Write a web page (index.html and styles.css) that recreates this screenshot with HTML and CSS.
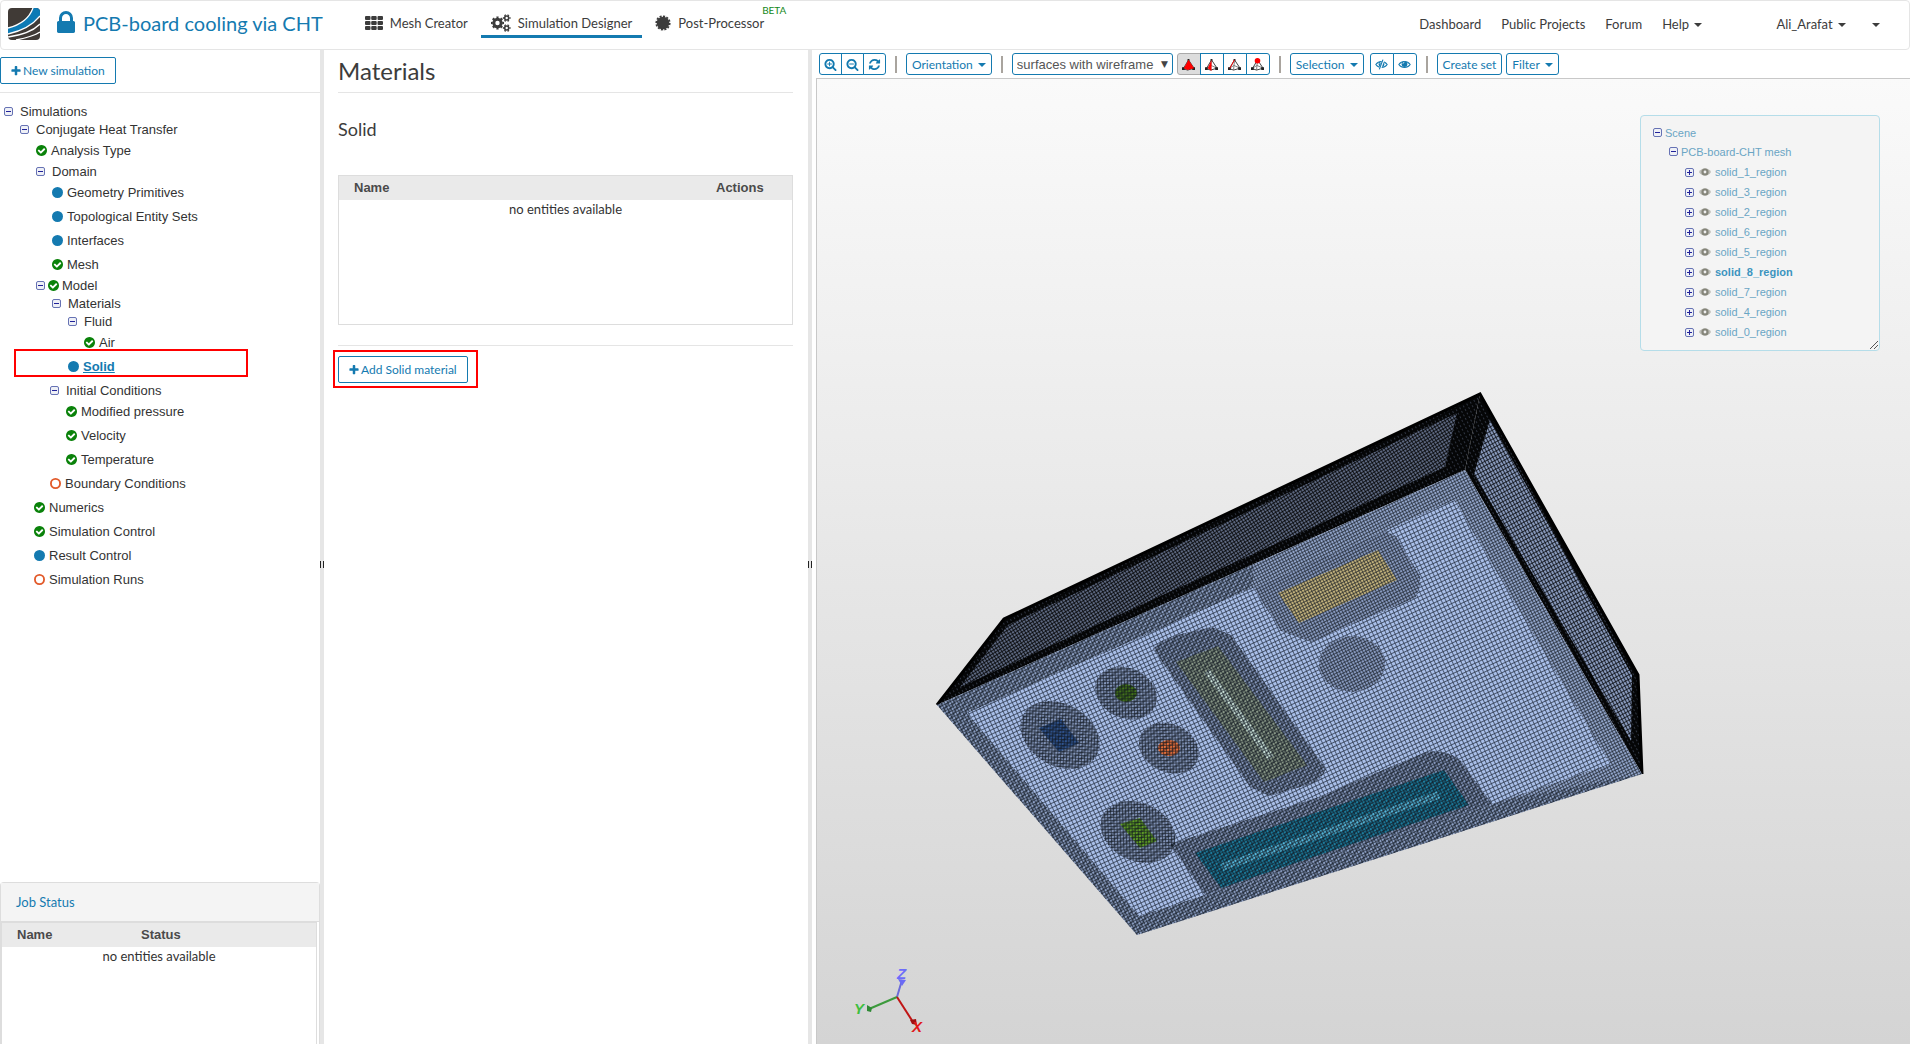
FILE: index.html
```html
<!DOCTYPE html>
<html lang="en">
<head>
  <meta charset="UTF-8" />
  <title>PCB-board cooling via CHT</title>
  <link rel="stylesheet" href="styles.css">
</head>
<body>
  <!-- icon sprite -->
  <svg class="sprite" aria-hidden="true">
    <symbol id="lock" viewBox="320 128 1152 1408"><path d="M640 768h512v-192q0-106-75-181t-181-75-181 75-75 181v192zm832 96v576q0 40-28 68t-68 28h-960q-40 0-68-28t-28-68v-576q0-40 28-68t68-28h32v-192q0-184 132-316t316-132 316 132 132 316v192h32q40 0 68 28t28 68z"/></symbol>
    <symbol id="plus" viewBox="128 128 1536 1536"><path d="M1600 736v192q0 40-28 68t-68 28h-416v416q0 40-28 68t-68 28h-192q-40 0-68-28t-28-68v-416h-416q-40 0-68-28t-28-68v-192q0-40 28-68t68-28h416v-416q0-40 28-68t68-28h192q40 0 68 28t28 68v416h416q40 0 68 28t28 68z"/></symbol>
    <symbol id="check" viewBox="128 128 1536 1536"><path d="M1412 734q0-28-18-46l-91-90q-19-19-45-19t-45 19l-408 407-226-226q-19-19-45-19t-45 19l-91 90q-18 18-18 46 0 27 18 45l362 362q19 19 45 19 27 0 46-19l543-543q18-18 18-45zm252 162q0 209-103 385.5t-279.5 279.5-385.5 103-385.5-103-279.5-279.5-103-385.5 103-385.5 279.5-279.5 385.5-103 385.5 103 279.5 279.5 103 385.5z"/></symbol>
    <symbol id="dot" viewBox="0 0 12 12"><circle cx="6" cy="6" r="6"/></symbol>
    <symbol id="ring" viewBox="0 0 12 12"><circle cx="6" cy="6" r="5" fill="none" stroke="currentColor" stroke-width="2"/></symbol>
    <symbol id="zoom-in" viewBox="0 0 1792 1792"><path d="M1088 800v64q0 13-9.5 22.5t-22.5 9.5h-224v224q0 13-9.5 22.5t-22.5 9.5h-64q-13 0-22.5-9.5t-9.5-22.5v-224h-224q-13 0-22.5-9.5t-9.5-22.5v-64q0-13 9.5-22.5t22.5-9.5h224v-224q0-13 9.5-22.5t22.5-9.5h64q13 0 22.5 9.5t9.5 22.5v224h224q13 0 22.5 9.5t9.5 22.5zm128 32q0-185-131.5-316.5t-316.5-131.5-316.5 131.5-131.5 316.5 131.5 316.5 316.5 131.5 316.5-131.5 131.5-316.5zm512 832q0 53-37.5 90.5t-90.5 37.5q-54 0-90-38l-343-342q-179 124-399 124-143 0-273.5-55.5t-225-150-150-225-55.5-273.5 55.5-273.5 150-225 225-150 273.5-55.5 273.5 55.5 225 150 150 225 55.5 273.5q0 220-124 399l343 343q37 37 37 90z"/></symbol>
    <symbol id="zoom-out" viewBox="0 0 1792 1792"><path d="M1088 800v64q0 13-9.5 22.5t-22.5 9.5h-576q-13 0-22.5-9.5t-9.5-22.5v-64q0-13 9.5-22.5t22.5-9.5h576q13 0 22.5 9.5t9.5 22.5zm128 32q0-185-131.5-316.5t-316.5-131.5-316.5 131.5-131.5 316.5 131.5 316.5 316.5 131.5 316.5-131.5 131.5-316.5zm512 832q0 53-37.5 90.5t-90.5 37.5q-54 0-90-38l-343-342q-179 124-399 124-143 0-273.5-55.5t-225-150-150-225-55.5-273.5 55.5-273.5 150-225 225-150 273.5-55.5 273.5 55.5 225 150 150 225 55.5 273.5q0 220-124 399l343 343q37 37 37 90z"/></symbol>
    <symbol id="refresh" viewBox="0 0 1792 1792"><path d="M1639 1056q0 5-1 7-64 268-268 434.5t-478 166.5q-146 0-282.5-55t-243.5-157l-129 129q-19 19-45 19t-45-19-19-45v-448q0-26 19-45t45-19h448q26 0 45 19t19 45-19 45l-137 137q71 66 161 102t187 36q134 0 250-65t186-179q11-17 53-117 8-23 30-23h192q13 0 22.5 9.5t9.5 22.5zm25-800v448q0 26-19 45t-45 19h-448q-26 0-45-19t-19-45 19-45l138-138q-148-137-349-137-134 0-250 65t-186 179q-11 17-53 117-8 23-30 23h-199q-13 0-22.5-9.5t-9.5-22.5v-7q65-268 270-434.5t480-166.5q146 0 284 55.5t245 156.5l130-129q19-19 45-19t45 19 19 45z"/></symbol>
    <symbol id="eye" viewBox="0 0 16 12"><path d="M1 6C4.500 1 11.500 1 15 6 11.500 11 4.500 11 1 6z" fill="none" stroke="currentColor" stroke-width="1.300"/><circle cx="8" cy="5.500" r="3.600"/><path d="M6 5q.3-1.500 1.800-1.700" fill="none" stroke="#fff"/></symbol>
    <symbol id="eye-off" viewBox="0 0 16 12"><use href="#eye"/><path d="M10.500 0L6 12" stroke="#fff" stroke-width="2.600"/><path d="M9.800 0L5.300 12" stroke="currentColor" stroke-width="1.300"/></symbol>
    <symbol id="scene-eye" viewBox="0 0 12 8"><path d="M0 4C3-1 9-1 12 4 9 9 3 9 0 4z" opacity=".5"/><circle cx="6" cy="4" r="3.600"/><circle cx="6" cy="4" r="1.400" fill="#eee"/></symbol>
    <symbol id="grid" viewBox="0 0 18 14"><path d="M1 0h3.500q1 0 1 1v2q0 1-1 1H1Q0 4 0 3V1Q0 0 1 0zM7.200 0h3.500q1 0 1 1v2q0 1-1 1H7.200q-1 0-1-1V1q0-1 1-1zM13.500 0H17q1 0 1 1v2q0 1-1 1h-3.500q-1 0-1-1V1q0-1 1-1zM1 5h3.500q1 0 1 1v2q0 1-1 1H1Q0 9 0 8V6Q0 5 1 5zM7.200 5h3.500q1 0 1 1v2q0 1-1 1H7.200q-1 0-1-1V6q0-1 1-1zM13.500 5H17q1 0 1 1v2q0 1-1 1h-3.500q-1 0-1-1V6q0-1 1-1zM1 10h3.500q1 0 1 1v2q0 1-1 1H1q-1 0-1-1v-2q0-1 1-1zM7.200 10h3.500q1 0 1 1v2q0 1-1 1H7.200q-1 0-1-1v-2q0-1 1-1zM13.500 10H17q1 0 1 1v2q0 1-1 1h-3.500q-1 0-1-1v-2q0-1 1-1z"/></symbol>
    <symbol id="cogs" viewBox="0 0 20 18">
      <g fill="none" stroke="currentColor">
        <circle cx="6.500" cy="9" r="3.700" stroke-width="3"/>
        <circle cx="6.500" cy="9" r="5.600" stroke-width="1.900" pathLength="80" stroke-dasharray="5 5" stroke-dashoffset="2.500"/>
        <circle cx="15.700" cy="4" r="2" stroke-width="1.600"/>
        <circle cx="15.700" cy="4" r="3.200" stroke-width="1.300" pathLength="60" stroke-dasharray="5 5" stroke-dashoffset="2.500"/>
        <circle cx="15.700" cy="14" r="2" stroke-width="1.600"/>
        <circle cx="15.700" cy="14" r="3.200" stroke-width="1.300" pathLength="60" stroke-dasharray="5 5" stroke-dashoffset="2.500"/>
      </g>
    </symbol>
    <symbol id="seal" viewBox="0 0 16 16"><circle cx="8" cy="8" r="6.300"/><circle cx="8" cy="8" r="6.700" fill="none" stroke="currentColor" stroke-width="1.800" pathLength="120" stroke-dasharray="6 4"/></symbol>
    <symbol id="tetra" viewBox="0 0 14 14"><path d="M7 2L1.500 11.500 6 13l7-2z" fill="#fff" stroke="#333"/><path d="M7 2l-1 11M1.500 11l5-3L13 11" fill="none" stroke="#777"/><path d="M6 1h2v2H6zM0 10h3v3H0zM11 10h3v3h-3z" fill="#222"/></symbol>
  </svg>

  <header class="topbar">
    <a class="logo" href="#" aria-label="Home">
      <svg viewBox="0 0 32 32">
        <clipPath id="logoClip"><rect width="32" height="32" rx="4"/></clipPath>
        <g clip-path="url(#logoClip)">
          <rect width="32" height="32" fill="#403a36"/>
          <path d="M0 20C12 17 21 11 25 0h7v8C24 18 14 23 0 26z" fill="#0c7ab5"/>
          <g fill="none" stroke="#fff" stroke-width="1.300">
            <path d="M0 20C12 17 21 11 25 0"/>
            <path d="M0 26C14 23 24 18 32 8"/>
            <path d="M0 29C14 27 24 24 32 16"/>
            <path d="M8 32C18 30 26 28 32 24"/>
          </g>
        </g>
      </svg>
    </a>
    <a class="project" href="#"><svg class="lock"><use href="#lock"/></svg>PCB-board cooling via CHT</a>
    <nav class="tabs">
      <a class="tab" href="#"><svg width="18" height="14"><use href="#grid"/></svg>Mesh Creator</a>
      <a class="tab active" href="#"><svg width="20" height="18"><use href="#cogs"/></svg>Simulation Designer</a>
      <a class="tab" href="#"><svg width="16" height="16"><use href="#seal"/></svg>Post-Processor<span class="beta">BETA</span></a>
    </nav>
    <nav class="links">
      <a href="#">Dashboard</a>
      <a href="#">Public Projects</a>
      <a href="#">Forum</a>
      <a href="#">Help <i class="caret"></i></a>
      <a class="user" href="#">Ali_Arafat <i class="caret"></i></a>
      <a href="#" aria-label="More"><i class="caret"></i></a>
    </nav>
  </header>

  <main class="workspace">
    <aside class="sidebar">
      <div class="sidebar-head">
        <button class="btn"><svg><use href="#plus"/></svg>New simulation</button>
      </div>
      <ul class="tree">
        <li><div class="node"><button class="toggle" aria-label="Collapse"></button><a href="#">Simulations</a></div>
          <ul>
            <li><div class="node"><button class="toggle" aria-label="Collapse"></button><a href="#">Conjugate Heat Transfer</a></div>
              <ul>
                <li class="leaf"><svg class="ok"><use href="#check"/></svg><a href="#">Analysis Type</a></li>
                <li><div class="node"><button class="toggle" aria-label="Collapse"></button><a href="#">Domain</a></div>
                  <ul>
                    <li class="leaf"><svg class="info"><use href="#dot"/></svg><a href="#">Geometry Primitives</a></li>
                    <li class="leaf"><svg class="info"><use href="#dot"/></svg><a href="#">Topological Entity Sets</a></li>
                    <li class="leaf"><svg class="info"><use href="#dot"/></svg><a href="#">Interfaces</a></li>
                    <li class="leaf"><svg class="ok"><use href="#check"/></svg><a href="#">Mesh</a></li>
                  </ul>
                </li>
                <li><div class="node with-state"><button class="toggle" aria-label="Collapse"></button><svg class="ok"><use href="#check"/></svg><a href="#">Model</a></div>
                  <ul>
                    <li><div class="node"><button class="toggle" aria-label="Collapse"></button><a href="#">Materials</a></div>
                      <ul>
                        <li><div class="node"><button class="toggle" aria-label="Collapse"></button><a href="#">Fluid</a></div>
                          <ul>
                            <li class="leaf"><svg class="ok"><use href="#check"/></svg><a href="#">Air</a></li>
                          </ul>
                        </li>
                        <li class="leaf selected"><svg class="info"><use href="#dot"/></svg><a href="#">Solid</a></li>
                      </ul>
                    </li>
                    <li class="group outdent"><div class="node"><button class="toggle" aria-label="Collapse"></button><a href="#">Initial Conditions</a></div>
                      <ul>
                        <li class="leaf"><svg class="ok"><use href="#check"/></svg><a href="#">Modified pressure</a></li>
                        <li class="leaf"><svg class="ok"><use href="#check"/></svg><a href="#">Velocity</a></li>
                        <li class="leaf"><svg class="ok"><use href="#check"/></svg><a href="#">Temperature</a></li>
                      </ul>
                    </li>
                    <li class="leaf outdent"><svg class="todo"><use href="#ring"/></svg><a href="#">Boundary Conditions</a></li>
                  </ul>
                </li>
                <li class="leaf outdent"><svg class="ok"><use href="#check"/></svg><a href="#">Numerics</a></li>
                <li class="leaf outdent"><svg class="ok"><use href="#check"/></svg><a href="#">Simulation Control</a></li>
                <li class="leaf outdent"><svg class="info"><use href="#dot"/></svg><a href="#">Result Control</a></li>
                <li class="leaf outdent"><svg class="todo"><use href="#ring"/></svg><a href="#">Simulation Runs</a></li>
              </ul>
            </li>
          </ul>
        </li>
      </ul>
      <section class="jobs">
        <h2>Job Status</h2>
        <div class="jobs-body">
          <table>
            <thead><tr><th>Name</th><th class="col-status">Status</th></tr></thead>
            <tbody><tr><td colspan="2">no entities available</td></tr></tbody>
          </table>
        </div>
      </section>
    </aside>
    <div class="splitter"></div>

    <section class="panel">
      <h1>Materials</h1>
      <h2>Solid</h2>
      <div class="entities">
        <table>
          <thead><tr><th>Name</th><th class="col-actions">Actions</th></tr></thead>
          <tbody><tr><td colspan="2">no entities available</td></tr></tbody>
        </table>
      </div>
      <div class="panel-foot">
        <span class="marked"><button class="btn"><svg><use href="#plus"/></svg>Add Solid material</button></span>
      </div>
    </section>
    <div class="splitter"></div>

    <section class="viewer">
      <div class="toolbar">
        <div class="btn-group zoom">
          <button aria-label="Zoom in"><svg><use href="#zoom-in"/></svg></button>
          <button aria-label="Zoom out"><svg><use href="#zoom-out"/></svg></button>
          <button aria-label="Reset view"><svg><use href="#refresh"/></svg></button>
        </div>
        <i class="sep"></i>
        <button class="tool">Orientation <i class="caret"></i></button>
        <i class="sep"></i>
        <div class="render">
          <span class="select-wrap"><select aria-label="Render mode"><option>surfaces with wireframe</option></select></span>
          <div class="btn-group">
            <button class="pressed" aria-label="Pick volumes"><svg viewBox="0 0 14 14"><use href="#tetra"/><path d="M7 2L2 11l4 2 7-2z" fill="red"/></svg></button>
            <button aria-label="Pick faces"><svg viewBox="0 0 14 14"><use href="#tetra"/><path d="M7 2L3 11l4 3z" fill="red"/></svg></button>
            <button aria-label="Pick edges"><svg viewBox="0 0 14 14"><use href="#tetra"/><path d="M7 2L2 11" stroke="red"/></svg></button>
            <button aria-label="Pick nodes"><svg viewBox="0 0 14 14"><use href="#tetra"/><circle cx="7" cy="3" r="3" fill="red"/></svg></button>
          </div>
        </div>
        <i class="sep"></i>
        <button class="tool">Selection <i class="caret"></i></button>
        <div class="btn-group eyes">
          <button aria-label="Hide selection"><svg><use href="#eye-off"/></svg></button>
          <button aria-label="Show all"><svg><use href="#eye"/></svg></button>
        </div>
        <i class="sep"></i>
        <div class="sets">
          <button class="tool">Create set</button>
          <button class="tool">Filter <i class="caret"></i></button>
        </div>
      </div>

      <div class="canvas">
        <svg class="model" viewBox="817 79 1093 965" role="img" aria-label="PCB board mesh">
          <defs>
            <!-- wireframe textures: coarse, refined, side walls -->
            <pattern id="coarse" width="4" height="4" patternUnits="userSpaceOnUse" patternTransform="rotate(-25)">
              <rect width="4" height="4" fill="#a9bfe9"/><path d="M0 0h4M0 0v4" stroke="#263143" stroke-width="1.400"/>
            </pattern>
            <pattern id="fine" width="3" height="3" patternUnits="userSpaceOnUse" patternTransform="rotate(-27)">
              <path d="M0 0h3M0 0v3" stroke="#10161f" stroke-width="1.500" stroke-opacity=".85"/>
            </pattern>
            <pattern id="moire" width="5" height="5" patternUnits="userSpaceOnUse" patternTransform="rotate(-62)">
              <path d="M0 2h5" stroke="#0d131e" stroke-width="2.400" stroke-opacity=".4"/>
            </pattern>
            <pattern id="wall" width="3" height="3" patternUnits="userSpaceOnUse" patternTransform="rotate(-32)">
              <rect width="3" height="3" fill="#5d6880"/><path d="M0 0h3M0 0v3" stroke="#000" stroke-width="1.500"/>
            </pattern>
            <pattern id="edge" width="4" height="4" patternUnits="userSpaceOnUse" patternTransform="rotate(-28)">
              <rect width="4" height="4" fill="#050607"/><path d="M1 2h1" stroke="#59637a"/>
            </pattern>
            <pattern id="wallRight" width="4" height="3" patternUnits="userSpaceOnUse" patternTransform="rotate(62)">
              <rect width="4" height="3" fill="#8798ba"/><path d="M0 0h4M0 0v3" stroke="#05070b" stroke-width="1.500"/>
            </pattern>
            <!-- refined zones around the components -->
            <g id="zones">
              <path d="M1153 649q8-10 24-14l35-8 19 8 95 134q-4 10-15 15l-42 12-19-9z"/>
              <ellipse cx="1126" cy="693" rx="32" ry="25" transform="rotate(25 1126 693)"/>
              <ellipse cx="1060" cy="735" rx="42" ry="31" transform="rotate(30 1060 735)"/>
              <ellipse cx="1169" cy="748" rx="31" ry="24" transform="rotate(25 1169 748)"/>
              <ellipse cx="1138" cy="832" rx="39" ry="29" transform="rotate(25 1138 832)"/>
              <path d="M1170 844l146-46 110-46q20-3 34 8l32 44-287 91z"/>
            </g>
            <g id="zonesFlat">
              <path d="M1253 588l132-57 11 5 24 40q1 14-5 22l-104 44-30-11z"/>
              <ellipse cx="1352" cy="664" rx="33" ry="28"/>
            </g>
          </defs>
          <path d="M937 705l67-86 476-225-15 76z" fill="url(#edge)"/>
          <path d="M960 687l48-62 449-212-12 54z" fill="url(#wall)"/>
          <path d="M1465 470l15-76 158 281 4 99z" fill="url(#edge)"/>
          <path d="M1474 474l16-54 142 255-1 66z" fill="url(#wallRight)"/>
          <path d="M937 705l67-86 476-225 158 281 4 99" fill="none" stroke="#000" stroke-width="3"/>

          <path d="M937 705l528-235 177 304-505 161z" fill="#91a4c9"/>
          <path d="M937 705l528-235 177 304-505 161z" fill="url(#fine)"/>
          <path d="M937 705l316-141v24L967 713l172 203 66-21 300-95 137-26-505 161z" fill="url(#moire)"/>
          <path d="M967 713l286-125 132-57 69-31 156 264-118 40-287 91-66 21z" fill="url(#coarse)"/>

          <g fill="#8799be">
            <use href="#zones"/>
            <use href="#zonesFlat"/>
          </g>
          <path d="M1278 593l100-43 19 30-98 43z" fill="#c0b07b"/>
          <path d="M1176 662l42-16 89 119-43 17z" fill="#8b9a89"/>
          <path d="M1207 671l64 87" stroke="#d0e8df" stroke-width="7"/>
          <ellipse cx="1126" cy="693" rx="11" ry="9" fill="#447519"/>
          <path d="M1039 728l22-9 18 24-20 9z" fill="#305592"/>
          <ellipse cx="1169" cy="748" rx="11" ry="8" fill="#ee713a"/>
          <path d="M1120 824l20-6 17 23-17 7z" fill="#62a325"/>
          <path d="M1195 853l249-83 25 35-248 83z" fill="#1d7fa1"/>
          <path d="M1222 867l217-72" stroke="#55bbe0" stroke-width="8"/>

          <g fill="url(#fine)">
            <use href="#zones"/>
            <use href="#zonesFlat"/>
          </g>
          <g fill="url(#moire)">
            <use href="#zones"/>
          </g>

          <!-- axes -->
          <g class="axes">
            <path d="M897 997l5-17" stroke="#6b6bd8"/><path d="M898 979l8 1-4 6z" fill="#6a6af5"/>
            <path d="M897 997l-28 12" stroke="#3c9a3c"/><path d="M867 1005l5 3-1 4-4-1z" fill="#2f8a35"/>
            <path d="M897 997l16 25" stroke="#c01515"/><path d="M910 1020l6-1 1 6-5-1z" fill="#a01010"/>
            <text x="897" y="979" fill="#6d6dfa">Z</text>
            <text x="854" y="1014" fill="#3fbf3f">Y</text>
            <text x="912" y="1032" fill="#e01818">X</text>
          </g>
        </svg>

        <div class="scene">
          <ul>
            <li><div class="row"><button class="toggle" aria-label="Collapse"></button><a href="#">Scene</a></div>
              <ul>
                <li><div class="row"><button class="toggle" aria-label="Collapse"></button><a href="#">PCB-board-CHT mesh</a></div>
                  <ul class="solids">
                    <li class="row"><button class="toggle closed" aria-label="Expand"></button><svg><use href="#scene-eye"/></svg><a href="#">solid_1_region</a></li>
                    <li class="row"><button class="toggle closed" aria-label="Expand"></button><svg><use href="#scene-eye"/></svg><a href="#">solid_3_region</a></li>
                    <li class="row"><button class="toggle closed" aria-label="Expand"></button><svg><use href="#scene-eye"/></svg><a href="#">solid_2_region</a></li>
                    <li class="row"><button class="toggle closed" aria-label="Expand"></button><svg><use href="#scene-eye"/></svg><a href="#">solid_6_region</a></li>
                    <li class="row"><button class="toggle closed" aria-label="Expand"></button><svg><use href="#scene-eye"/></svg><a href="#">solid_5_region</a></li>
                    <li class="row current"><button class="toggle closed" aria-label="Expand"></button><svg><use href="#scene-eye"/></svg><a href="#">solid_8_region</a></li>
                    <li class="row"><button class="toggle closed" aria-label="Expand"></button><svg><use href="#scene-eye"/></svg><a href="#">solid_7_region</a></li>
                    <li class="row"><button class="toggle closed" aria-label="Expand"></button><svg><use href="#scene-eye"/></svg><a href="#">solid_4_region</a></li>
                    <li class="row"><button class="toggle closed" aria-label="Expand"></button><svg><use href="#scene-eye"/></svg><a href="#">solid_0_region</a></li>
                  </ul>
                </li>
              </ul>
            </li>
          </ul>
          <svg class="grip" viewBox="0 0 8 8"><path d="M0 8l8-8M4 8l4-4" stroke="#555"/></svg>
        </div>
      </div>
    </section>
  </main>
</body>
</html>
```

FILE: styles.css
```css
*,
*::before,
*::after {
  box-sizing: border-box;
}
body {
  margin: 0;
  height: 100vh;
  display: flex;
  flex-direction: column;
  font-family: Lato, sans-serif;
  font-size: 13px;
  color: #3c3c3c;
  background-color: #fff;
}
a {
  color: inherit;
  text-decoration: none;
}
button {
  font-family: inherit;
  cursor: pointer;
}
ul {
  list-style: none;
  margin: 0;
  padding: 0;
}
svg {
  fill: currentColor;
  flex: none;
}
.sprite {
  display: none;
}
.caret {
  display: inline-block;
  border: 4px solid transparent;
  border-top-color: currentColor;
  border-bottom: 0;
  margin-left: 2px;
  vertical-align: 2px;
}

/* header */
.topbar {
  display: flex;
  align-items: center;
  height: 50px;
  padding: 0 29px 2px 7px;
  border: 1px solid #e5e5e5;
  border-radius: 4px;
}
.logo svg {
  display: block;
  width: 32px;
  height: 32px;
}
.project {
  display: flex;
  align-items: center;
  gap: 8px;
  margin-left: 17px;
  padding-bottom: 2px;
  font-size: 20px;
  color: #147ab0;
}
.lock {
  width: 18px;
  height: 22px;
  margin-bottom: 2px;
}
.tabs {
  display: flex;
  gap: 3px;
  margin-left: 32px;
}
.tab {
  position: relative;
  display: flex;
  align-items: center;
  gap: 7px;
  height: 28px;
  padding: 0 10px;
  border-bottom: 3px solid transparent;
}
.tab.active {
  border-bottom-color: #147ab0;
}
.beta {
  position: absolute;
  left: 100%;
  top: -6px;
  margin-left: -12px;
  font-size: 10px;
  line-height: 12px;
  color: #16891b;
}
.links {
  display: flex;
  gap: 20px;
  margin-left: auto;
}
.user {
  margin: 0 4px 0 54px;
}

/* three columns with drag bars */
.workspace {
  flex: 1;
  min-height: 0;
  display: grid;
  grid-template-columns: 320px 4px 484px 4px 1fr;
}
.splitter {
  background-color: #e6e6e6;
  display: flex;
  align-items: center;
  justify-content: center;
}
.splitter::before {
  content: "";
  width: 4px;
  height: 7px;
  margin-top: 34px;
  border: solid #222;
  border-width: 0 1px;
}

/* buttons */
.btn {
  display: inline-flex;
  align-items: center;
  gap: 2px;
  height: 27px;
  padding: 0 10px;
  font-size: 12px;
  color: #147ab0;
  background-color: #fff;
  border: 1px solid #147ab0;
  border-radius: 2px;
}
.btn svg {
  width: 10px;
  height: 10px;
}

/* sidebar */
.sidebar {
  display: flex;
  flex-direction: column;
  min-height: 0;
}
.sidebar-head {
  height: 43px;
  padding-top: 7px;
  border-bottom: 1px solid #e5e5e5;
}
.tree {
  padding: 9px 0 0 4px;
  font-family: "Liberation Sans", sans-serif;
  color: #333;
}
.tree ul {
  padding-left: 16px;
}
.node {
  display: flex;
  align-items: center;
  gap: 7px;
  height: 18px;
}
.node.with-state {
  gap: 3px;
}
.leaf {
  position: relative;
  display: flex;
  align-items: center;
  gap: 4px;
  height: 24px;
}
.tree svg {
  width: 11px;
  height: 11px;
}
.group {
  padding-top: 3px;
}
.outdent {
  margin-left: -2px;
}
.ok {
  color: #0a820a;
}
.info {
  color: #147ab0;
}
.todo {
  color: #e25a2a;
}
.toggle {
  width: 9px;
  height: 9px;
  padding: 0;
  border: 1px solid #6672b4;
  border-radius: 2px;
  background: linear-gradient(#22229a, #22229a) center / 5px 1px no-repeat #eef0f6;
}
.toggle.closed {
  background: linear-gradient(#22229a, #22229a) center / 5px 1px no-repeat, linear-gradient(#22229a, #22229a) center / 1px 5px no-repeat #eef0f6;
}
.selected a {
  color: #147ab0;
  font-weight: bold;
  text-decoration: underline;
}
.selected::after {
  content: "";
  position: absolute;
  left: -54px;
  top: -5px;
  width: 234px;
  height: 28px;
  border: 2px solid #f00;
  pointer-events: none;
}

/* entity tables */
table {
  width: 100%;
  border-collapse: collapse;
  text-align: center;
}
th {
  height: 24px;
  padding: 0 0 2px 15px;
  text-align: left;
  font-family: "Liberation Sans", sans-serif;
  font-size: 13px;
  color: #4a4a4a;
  background-color: #eaeaea;
}
td {
  padding: 0;
  height: 18px;
  font-size: 13px;
  color: #333;
}

/* job status */
.jobs {
  margin-top: auto;
  height: 162px;
  border: 1px solid #ddd;
  border-bottom: 0;
  border-radius: 4px 4px 0 0;
}
.jobs h2 {
  margin: 0;
  height: 39px;
  padding-left: 15px;
  font-size: 13px;
  line-height: 39px;
  font-weight: normal;
  color: #147ab0;
  background-color: #f4f4f4;
  border-bottom: 1px solid #ddd;
}
.jobs-body {
  height: 122px;
  margin-right: 2px;
  border: 1px solid #ddd;
  border-bottom: 0;
}
.col-status {
  width: 190px;
}

/* materials panel */
.panel {
  padding: 0 15px 0 14px;
}
.panel h1 {
  margin: 0;
  height: 43px;
  font-size: 24px;
  line-height: 42px;
  font-weight: normal;
  border-bottom: 1px solid #e5e5e5;
}
.panel h2 {
  margin: 23px 0 33px;
  font-size: 18px;
  line-height: 26px;
  font-weight: normal;
}
.entities {
  height: 150px;
  border: 1px solid #ddd;
}
.col-actions {
  width: 91px;
}
.panel-foot {
  margin-top: 20px;
  padding-top: 10px;
  border-top: 1px solid #e5e5e5;
}
.marked {
  position: relative;
  display: inline-block;
}
.marked::after {
  content: "";
  position: absolute;
  inset: -6px -10px -5px -5px;
  border: 2px solid #f00;
  pointer-events: none;
}

/* viewer */
.viewer {
  display: flex;
  flex-direction: column;
  min-width: 0;
  padding-left: 4px;
}
.toolbar {
  display: flex;
  align-items: center;
  gap: 6px;
  height: 28px;
  padding: 0 3px;
  color: #147ab0;
}
.sep {
  width: 2px;
  height: 17px;
  margin: 0 3px;
  background-color: #a9a49e;
}
.tool,
.btn-group button {
  height: 22px;
  font-size: 12px;
  color: #147ab0;
  background-color: #fff;
  border: 1px solid #147ab0;
  border-radius: 3px;
}
.tool {
  padding: 0 5px;
  white-space: nowrap;
}
.btn-group {
  display: flex;
}
.btn-group button {
  display: flex;
  align-items: center;
  justify-content: center;
  width: 24px;
  padding: 0;
  border-radius: 0;
}
.zoom button {
  width: 23px;
}
.btn-group button + button {
  margin-left: -1px;
}
.btn-group button:first-child {
  border-radius: 3px 0 0 3px;
}
.btn-group button:last-child {
  border-radius: 0 3px 3px 0;
}
.btn-group .pressed {
  background-color: #ddd;
  border-color: #aaa;
}
.btn-group svg {
  width: 13px;
  height: 13px;
}
.render,
.sets {
  display: flex;
  align-items: center;
  gap: 4px;
}
.select-wrap {
  position: relative;
}
.select-wrap::after {
  content: "▼";
  position: absolute;
  right: 5px;
  top: 5px;
  font: 9px/12px "DejaVu Sans", sans-serif;
  color: #444;
  pointer-events: none;
}
select {
  appearance: none;
  display: block;
  width: 161px;
  height: 22px;
  padding: 0 4px;
  font-family: "Liberation Sans", sans-serif;
  font-size: 13px;
  color: #555;
  background-color: #fff;
  border: 1px solid #147ab0;
  border-radius: 3px;
}
.canvas {
  position: relative;
  flex: 1;
  min-height: 0;
  border: solid #c8c8c8;
  border-width: 1px 0 0 1px;
  background: linear-gradient(#fafafa, #d4d4d4);
}
.model {
  display: block;
  width: 100%;
  height: 100%;
}
.axes path {
  stroke-width: 2;
}
.axes text {
  font: italic bold 15px "Liberation Sans", sans-serif;
}

/* scene overlay */
.scene {
  position: absolute;
  top: 36px;
  right: 30px;
  width: 240px;
  padding: 7px 12px 8px;
  font-family: "Liberation Sans", sans-serif;
  font-size: 11px;
  color: #6aa5c4;
  background-color: #f4f4f4;
  border: 1px solid #b5dde9;
  border-radius: 4px;
}
.scene ul ul {
  padding-left: 16px;
}
.scene .solids {
  padding-top: 1px;
}
.row {
  display: flex;
  align-items: center;
  gap: 3px;
  height: 19px;
}
.solids .row {
  height: 20px;
  gap: 4px;
}
.solids svg {
  width: 12px;
  height: 8px;
  margin-left: 1px;
  color: #85857a;
}
.current {
  font-weight: bold;
  color: #3d94bf;
}
.grip {
  position: absolute;
  right: 1px;
  bottom: 1px;
  width: 8px;
  height: 8px;
}
```
